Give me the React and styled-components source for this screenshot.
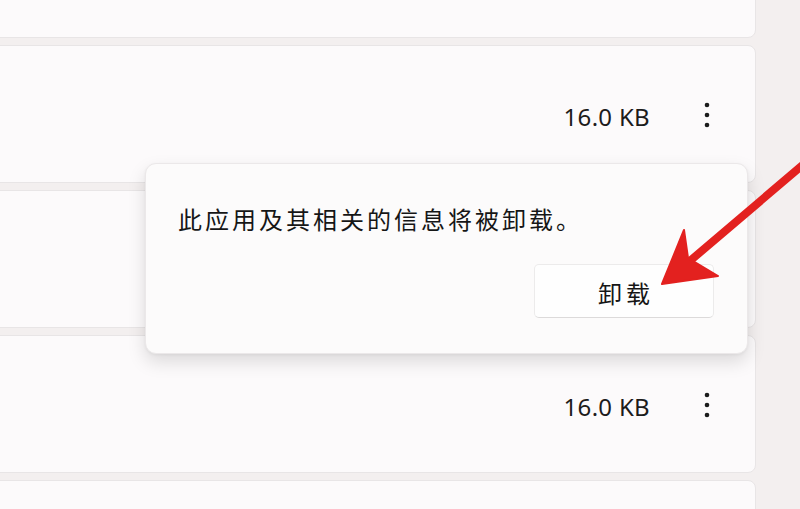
import React from "react";
import styled, { createGlobalStyle } from "styled-components";

const GlobalStyle = createGlobalStyle`
  html, body {
    margin: 0;
    padding: 0;
    background: #f3efef;
    overflow: hidden;
  }
  body {
    font-family: "Noto Sans", "Noto Sans CJK SC", sans-serif;
    color: #1b1b1b;
  }
`;

const Page = styled.div`
  position: relative;
  width: 800px;
  height: 509px;
  overflow: hidden;
`;

const List = styled.div`
  display: flex;
  flex-direction: column;
  gap: 7px;
  width: 776px;
  margin-left: -20px;
  margin-top: -100px;
`;

const Card = styled.div`
  box-sizing: border-box;
  height: 138px;
  display: flex;
  align-items: center;
  justify-content: flex-end;
  gap: 37px;
  padding-right: 28px;
  background: #fcfafb;
  border: 1px solid #e8e5e6;
  border-radius: 8px;
`;

const Size = styled.span`
  font-size: 24px;
  letter-spacing: 0.3px;
  color: #1c1c1c;
  padding-top: 5px;
`;

const MoreButton = styled.button`
  width: 40px;
  height: 40px;
  padding: 0;
  border: 0;
  background: transparent;
  display: flex;
  align-items: center;
  justify-content: center;
  color: #1c1c1c;
  padding-top: 2px;
`;

const Flyout = styled.div`
  position: absolute;
  left: 145px;
  top: 163px;
  width: 603px;
  box-sizing: border-box;
  padding: 40px 33px 35px 32px;
  display: flex;
  flex-direction: column;
  gap: 30px;
  background: #fcfbfb;
  border: 1px solid #ebe8e9;
  border-radius: 11px;
  box-shadow: 0 8px 18px rgba(0, 0, 0, 0.13), 0 1px 3px rgba(0, 0, 0, 0.05);
`;

const Message = styled.p`
  margin: 0;
  font-family: "Noto Sans CJK SC", sans-serif;
  font-size: 24px;
  letter-spacing: 3px;
  line-height: 30px;
  color: #161616;
`;

const Actions = styled.div`
  display: flex;
  justify-content: flex-end;
`;

const ActionButton = styled.button`
  width: 180px;
  height: 54px;
  box-sizing: border-box;
  background: #fefefe;
  border: 1px solid #ecebeb;
  border-bottom-color: #dcdada;
  border-radius: 5px;
  font-family: "Noto Sans CJK SC", sans-serif;
  font-size: 24px;
  letter-spacing: 4px;
  color: #161616;
  padding: 2px 0 0 4px;
`;

const Annotation = styled.svg`
  position: absolute;
  left: 0;
  top: 0;
  pointer-events: none;
`;

const Dots = () => (
  <svg width="6" height="26" viewBox="0 0 6 26">
    <circle cx="3" cy="3" r="2.3" fill="currentColor" />
    <circle cx="3" cy="13" r="2.3" fill="currentColor" />
    <circle cx="3" cy="23" r="2.3" fill="currentColor" />
  </svg>
);

const rows = [null, "16.0 KB", null, "16.0 KB", null];

export default function App() {
  return (
    <Page>
      <GlobalStyle />
      <List>
        {rows.map((size, i) => (
          <Card key={i}>
            {size && (
              <>
                <Size>{size}</Size>
                <MoreButton aria-label="更多">
                  <Dots />
                </MoreButton>
              </>
            )}
          </Card>
        ))}
      </List>

      <Flyout>
        <Message>此应用及其相关的信息将被卸载。</Message>
        <Actions>
          <ActionButton>卸载</ActionButton>
        </Actions>
      </Flyout>

      <Annotation width="800" height="509" viewBox="0 0 800 509">
        <line
          x1="805"
          y1="163"
          x2="684"
          y2="266"
          stroke="#e3211f"
          strokeWidth="8"
          strokeLinecap="round"
        />
        <polygon
          points="662,284 684,230 688,258 718,276"
          fill="#e3211f"
          stroke="#e3211f"
          strokeWidth="2"
          strokeLinejoin="round"
        />
      </Annotation>
    </Page>
  );
}
